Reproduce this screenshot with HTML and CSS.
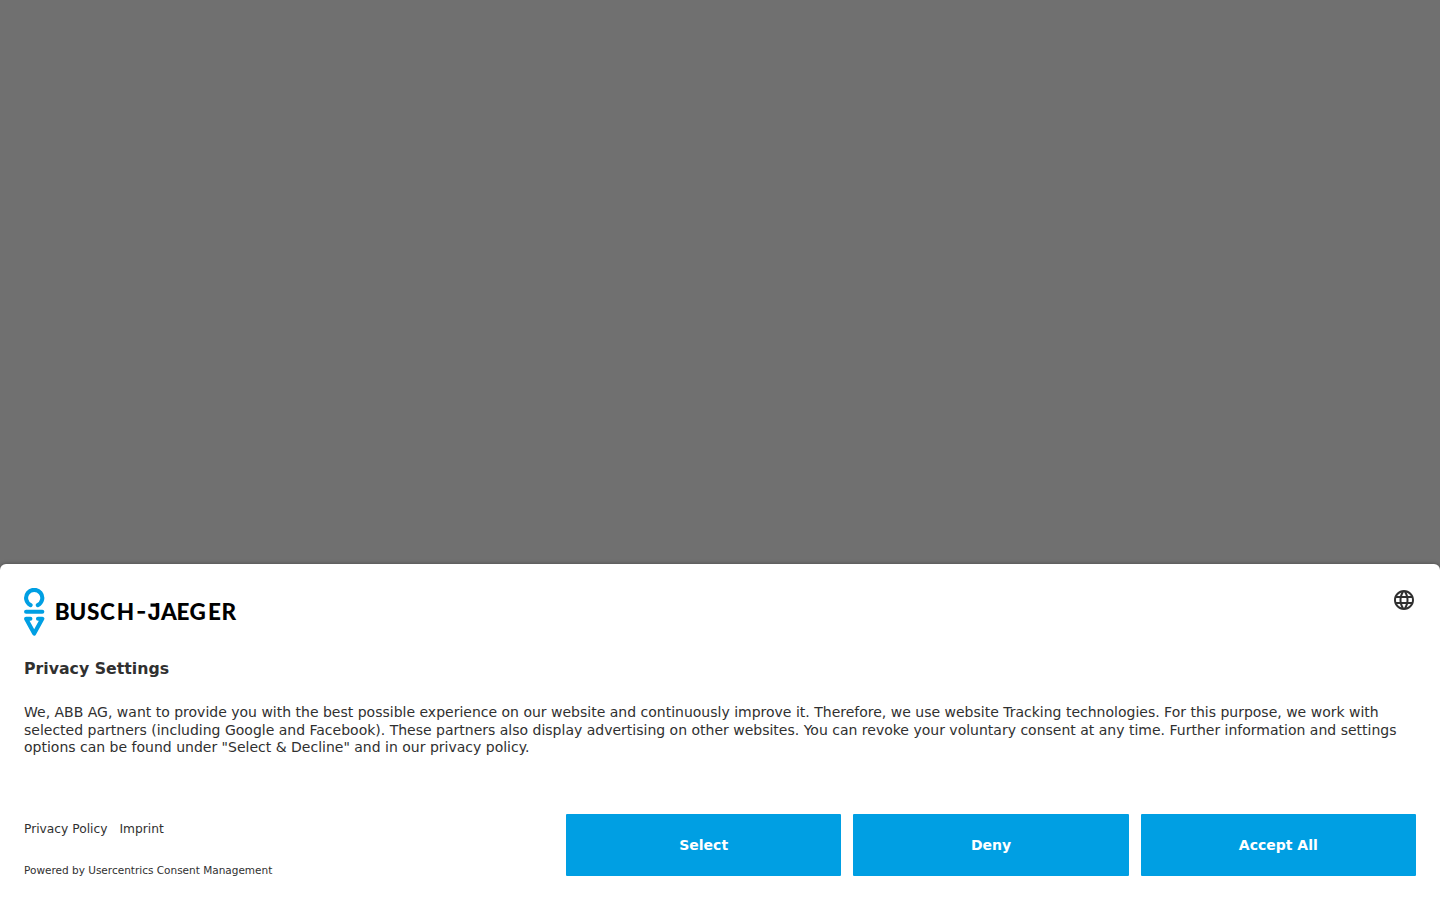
FILE: index.html
```
<!DOCTYPE html>
<html lang="en">
<head>
<meta charset="utf-8">
<title>Privacy Settings</title>
<link rel="stylesheet" href="styles.css">
</head>
<body>
<main class="overlay">
  <section class="banner" role="dialog" aria-labelledby="title">
    <header class="header">
      <svg class="logo" width="216" height="48" viewBox="0 0 216 48" role="img" aria-label="Busch-Jaeger">
        <g fill="none" stroke="#009fe3" stroke-width="4.1" stroke-linecap="round" stroke-linejoin="round">
          <path d="M6.6 17.2A8.1 8.1 0 1 1 13.8 17.2"/>
          <path d="M2.1 23.8H18.3"/>
          <path d="M6.4 30.7H2.1L10.2 45.6L18.3 30.7H14"/>
        </g>
        <text class="wordmark" y="31.7"><tspan x="30.8 45.6 63 76 92.8">BUSCH</tspan><tspan class="wide" x="112 123.4" y="31 31.7">-J</tspan><tspan x="136.9 152.6 165.6 184 197.6" y="31.7">AEGER</tspan></text>
        <path d="M126.5 15.5H133V18.7H126.5Z"/>
      </svg>
      <button class="language" aria-label="Language">
        <svg width="24" height="24" viewBox="0 0 24 24" fill="#303030"><path d="M11.99 2C6.47 2 2 6.48 2 12s4.47 10 9.99 10C17.52 22 22 17.52 22 12S17.52 2 11.99 2zm6.93 6h-2.95a15.65 15.65 0 0 0-1.38-3.56A8.03 8.03 0 0 1 18.92 8zM12 4.04c.83 1.2 1.48 2.53 1.91 3.96h-3.82c.43-1.43 1.08-2.76 1.91-3.96zM4.26 14C4.1 13.36 4 12.69 4 12s.1-1.36.26-2h3.38c-.08.66-.14 1.32-.14 2s.06 1.34.14 2H4.26zm.82 2h2.95c.32 1.25.78 2.45 1.38 3.56A7.99 7.99 0 0 1 5.08 16zm2.95-8H5.08a7.99 7.99 0 0 1 4.33-3.56A15.65 15.65 0 0 0 8.03 8zM12 19.96c-.83-1.2-1.48-2.53-1.91-3.96h3.82c-.43 1.43-1.08 2.76-1.91 3.96zM14.34 14H9.66c-.09-.66-.16-1.32-.16-2s.07-1.35.16-2h4.68c.09.65.16 1.32.16 2s-.07 1.34-.16 2zm.25 5.56c.6-1.11 1.06-2.31 1.38-3.56h2.95a8.03 8.03 0 0 1-4.33 3.56zM16.36 14c.08-.66.14-1.32.14-2s-.06-1.34-.14-2h3.38c.16.64.26 1.31.26 2s-.1 1.36-.26 2h-3.38z"/></svg>
      </button>
    </header>
    <h1 class="title" id="title">Privacy Settings</h1>
    <p class="message">We, ABB AG, want to provide you with the best possible experience on our website and continuously improve it. Therefore, we use website Tracking technologies. For this purpose, we work with selected partners (including Google and Facebook). These partners also display advertising on other websites. You can revoke your voluntary consent at any time. Further information and settings options can be found under "Select &amp; Decline" and in our privacy policy.</p>
    <footer class="footer">
      <div class="info">
        <nav class="links"><a>Privacy Policy</a><a>Imprint</a></nav>
        <div class="powered">Powered by Usercentrics Consent Management</div>
      </div>
      <div class="actions">
        <button class="action">Select</button>
        <button class="action">Deny</button>
        <button class="action">Accept All</button>
      </div>
    </footer>
  </section>
</main>
</body>
</html>
```
FILE: styles.css
```
* { box-sizing: border-box; }
body { margin: 0; font-family: "DejaVu Sans", sans-serif; color: #303030; }
button { border: 0; padding: 0; font-family: inherit; cursor: pointer; }
.overlay { height: 100vh; display: flex; flex-direction: column; justify-content: flex-end; background: #707070; overflow: hidden; }
.banner { height: 336px; padding: 24px; display: flex; flex-direction: column; background: #fff; border-radius: 6px 6px 0 0; box-shadow: 0 0 4px rgba(0, 0, 0, .35); }
.header { height: 48px; display: flex; justify-content: space-between; align-items: flex-start; }
.logo { display: block; }
.wordmark { font: 900 22.5px Lato, sans-serif; fill: #000; }
.wide { font-family: Inter, sans-serif; font-weight: 700; }
.language { width: 24px; height: 24px; background: none; }
.language svg { display: block; }
.title { margin: 23px 0 0; font-size: 15.75px; line-height: 20px; font-weight: 700; }
.message { margin: 25px 0 0; font-size: 14px; line-height: 17.5px; }
.footer { margin-top: auto; display: flex; justify-content: space-between; height: 62px; }
.info { padding-top: 7px; }
.links { display: flex; gap: 12px; font-size: 12.25px; line-height: 16px; }
.powered { margin-top: 26px; font-size: 10.5px; line-height: 14px; white-space: nowrap; }
.actions { width: 850px; display: grid; grid-template-columns: repeat(3, 1fr); gap: 12px; }
.action { background: #009fe3; color: #fff; font-size: 14px; font-weight: 700; border-radius: 1px; }
```
